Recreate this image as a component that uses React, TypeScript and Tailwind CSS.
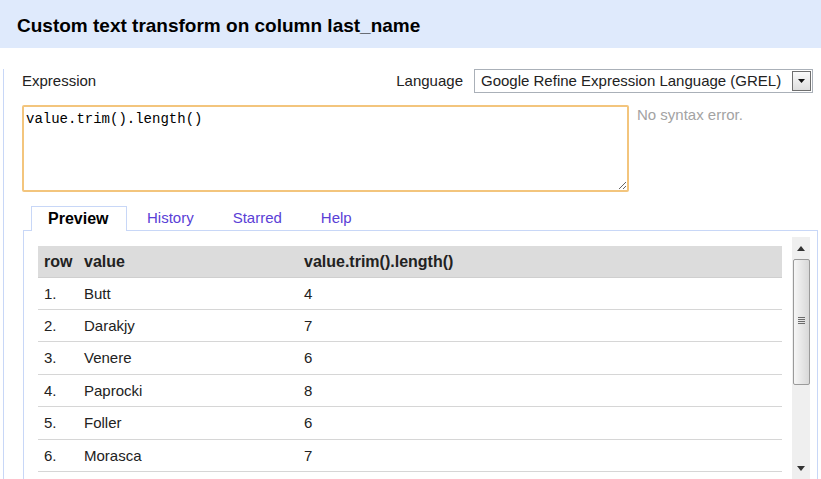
import React from "react";

const rows = [
  { n: "1.", value: "Butt", result: "4", h: "h-[32px]" },
  { n: "2.", value: "Darakjy", result: "7", h: "h-[32px]" },
  { n: "3.", value: "Venere", result: "6", h: "h-[33px]" },
  { n: "4.", value: "Paprocki", result: "8", h: "h-[32px]" },
  { n: "5.", value: "Foller", result: "6", h: "h-[33px]" },
  { n: "6.", value: "Morasca", result: "7", h: "h-[32px]" },
];

function Scrollbar() {
  return (
    <div className="w-[18px] h-[245px] shrink-0 bg-[#efefef] flex flex-col items-center">
      <div className="h-[22px] w-full flex items-center justify-center">
        <svg width="8" height="5" viewBox="0 0 8 5">
          <path d="M0 5 L4 0 L8 5 Z" fill="#333" />
        </svg>
      </div>
      <div className="w-[17px] h-[126px] rounded-[2px] border border-[#9a9a9a] bg-linear-to-r from-[#f6f6f6] to-[#d8d8d8] flex items-center justify-center">
        <div className="flex flex-col gap-[1px] -mt-[3px]">
          <div className="w-[7px] h-[1px] bg-[#6b6b6b]" />
          <div className="w-[7px] h-[1px] bg-[#6b6b6b]" />
          <div className="w-[7px] h-[1px] bg-[#6b6b6b]" />
          <div className="w-[7px] h-[1px] bg-[#6b6b6b]" />
        </div>
      </div>
      <div className="flex-1" />
      <div className="h-[22px] w-full flex items-start justify-center pt-[6px]">
        <svg width="8" height="5" viewBox="0 0 8 5">
          <path d="M0 0 L8 0 L4 5 Z" fill="#333" />
        </svg>
      </div>
    </div>
  );
}

export default function App() {
  return (
    <div className="w-[821px] h-[479px] overflow-hidden bg-white font-['Liberation_Sans',Arial,sans-serif] text-[#222]">
      <div className="h-[48px] bg-[#dfeafc] flex items-center pl-[17px] pt-[5px] text-[19px] font-bold text-black">
        Custom text transform on column last_name
      </div>

      <div className="ml-[3px] h-[431px] border-l border-[#c8d7f7] pl-[18px] pr-[8px]">
        <div className="mt-[21px] h-[24px] flex items-center justify-between text-[15px]">
          <span>Expression</span>
          <div className="flex items-center gap-[11px]">
            <span>Language</span>
            <div className="w-[339px] h-[24px] border border-[#aab0b8] flex items-center">
              <span className="flex-1 pl-[6px] text-[15px] whitespace-nowrap">
                Google Refine Expression Language (GREL)
              </span>
              <div className="w-[19px] h-[20px] mr-[1px] border border-[#6f6f6f] bg-linear-to-b from-[#fafafa] to-[#dedede] flex items-center justify-center">
                <svg width="7" height="4" viewBox="0 0 7 4">
                  <path d="M0 0 L7 0 L3.5 4 Z" fill="#111" />
                </svg>
              </div>
            </div>
          </div>
        </div>

        <div className="mt-[12px] flex items-start">
          <textarea
            readOnly
            defaultValue="value.trim().length()"
            className="w-[607px] h-[87px] border-2 border-[#f3c57d] rounded-[2px] pl-[2px] pt-[4px] font-['Liberation_Mono','Courier_New',monospace] text-[14px] leading-[16px] text-black outline-none"
          />
          <span className="ml-[8px] leading-[20px] text-[15px] text-[#a3a3a3]">
            No syntax error.
          </span>
        </div>

        <div className="mt-[14px] ml-[1px] w-[795px]">
          <div className="flex pl-[8px] h-[24px] text-[15px]">
            <div className="relative -mb-[1px] h-[25px] bg-white border border-b-0 border-[#c8d7f7] pl-[16px] pr-[18px] flex items-center font-bold text-[16px] text-black">
              Preview
            </div>
            <div className="px-[19.5px] flex items-center text-[#5a40d6]">History</div>
            <div className="px-[19.5px] flex items-center text-[#5a40d6]">Starred</div>
            <div className="px-[19.5px] flex items-center text-[#5a40d6]">Help</div>
          </div>

          <div className="h-[260px] border border-b-0 border-[#c8d7f7] pt-[6px] pr-[7px] flex">
            <div className="flex-1 pl-[14px] pr-[10px] pt-[9px] text-[15px]">
              <div className="h-[32px] bg-[#dcdcdc] border-b border-[#cfcfcf] flex items-center font-bold text-[16px] text-[#222]">
                <div className="w-[40px] pl-[6px]">row</div>
                <div className="w-[220px] pl-[6px]">value</div>
                <div className="flex-1 pl-[6px]">value.trim().length()</div>
              </div>
              {rows.map((r) => (
                <div key={r.n} className={`${r.h} border-b border-[#d6d6d6] flex items-center pt-[1px]`}>
                  <div className="w-[40px] pl-[6px]">{r.n}</div>
                  <div className="w-[220px] pl-[6px]">{r.value}</div>
                  <div className="flex-1 pl-[6px]">{r.result}</div>
                </div>
              ))}
            </div>
            <Scrollbar />
          </div>
        </div>
      </div>
    </div>
  );
}
